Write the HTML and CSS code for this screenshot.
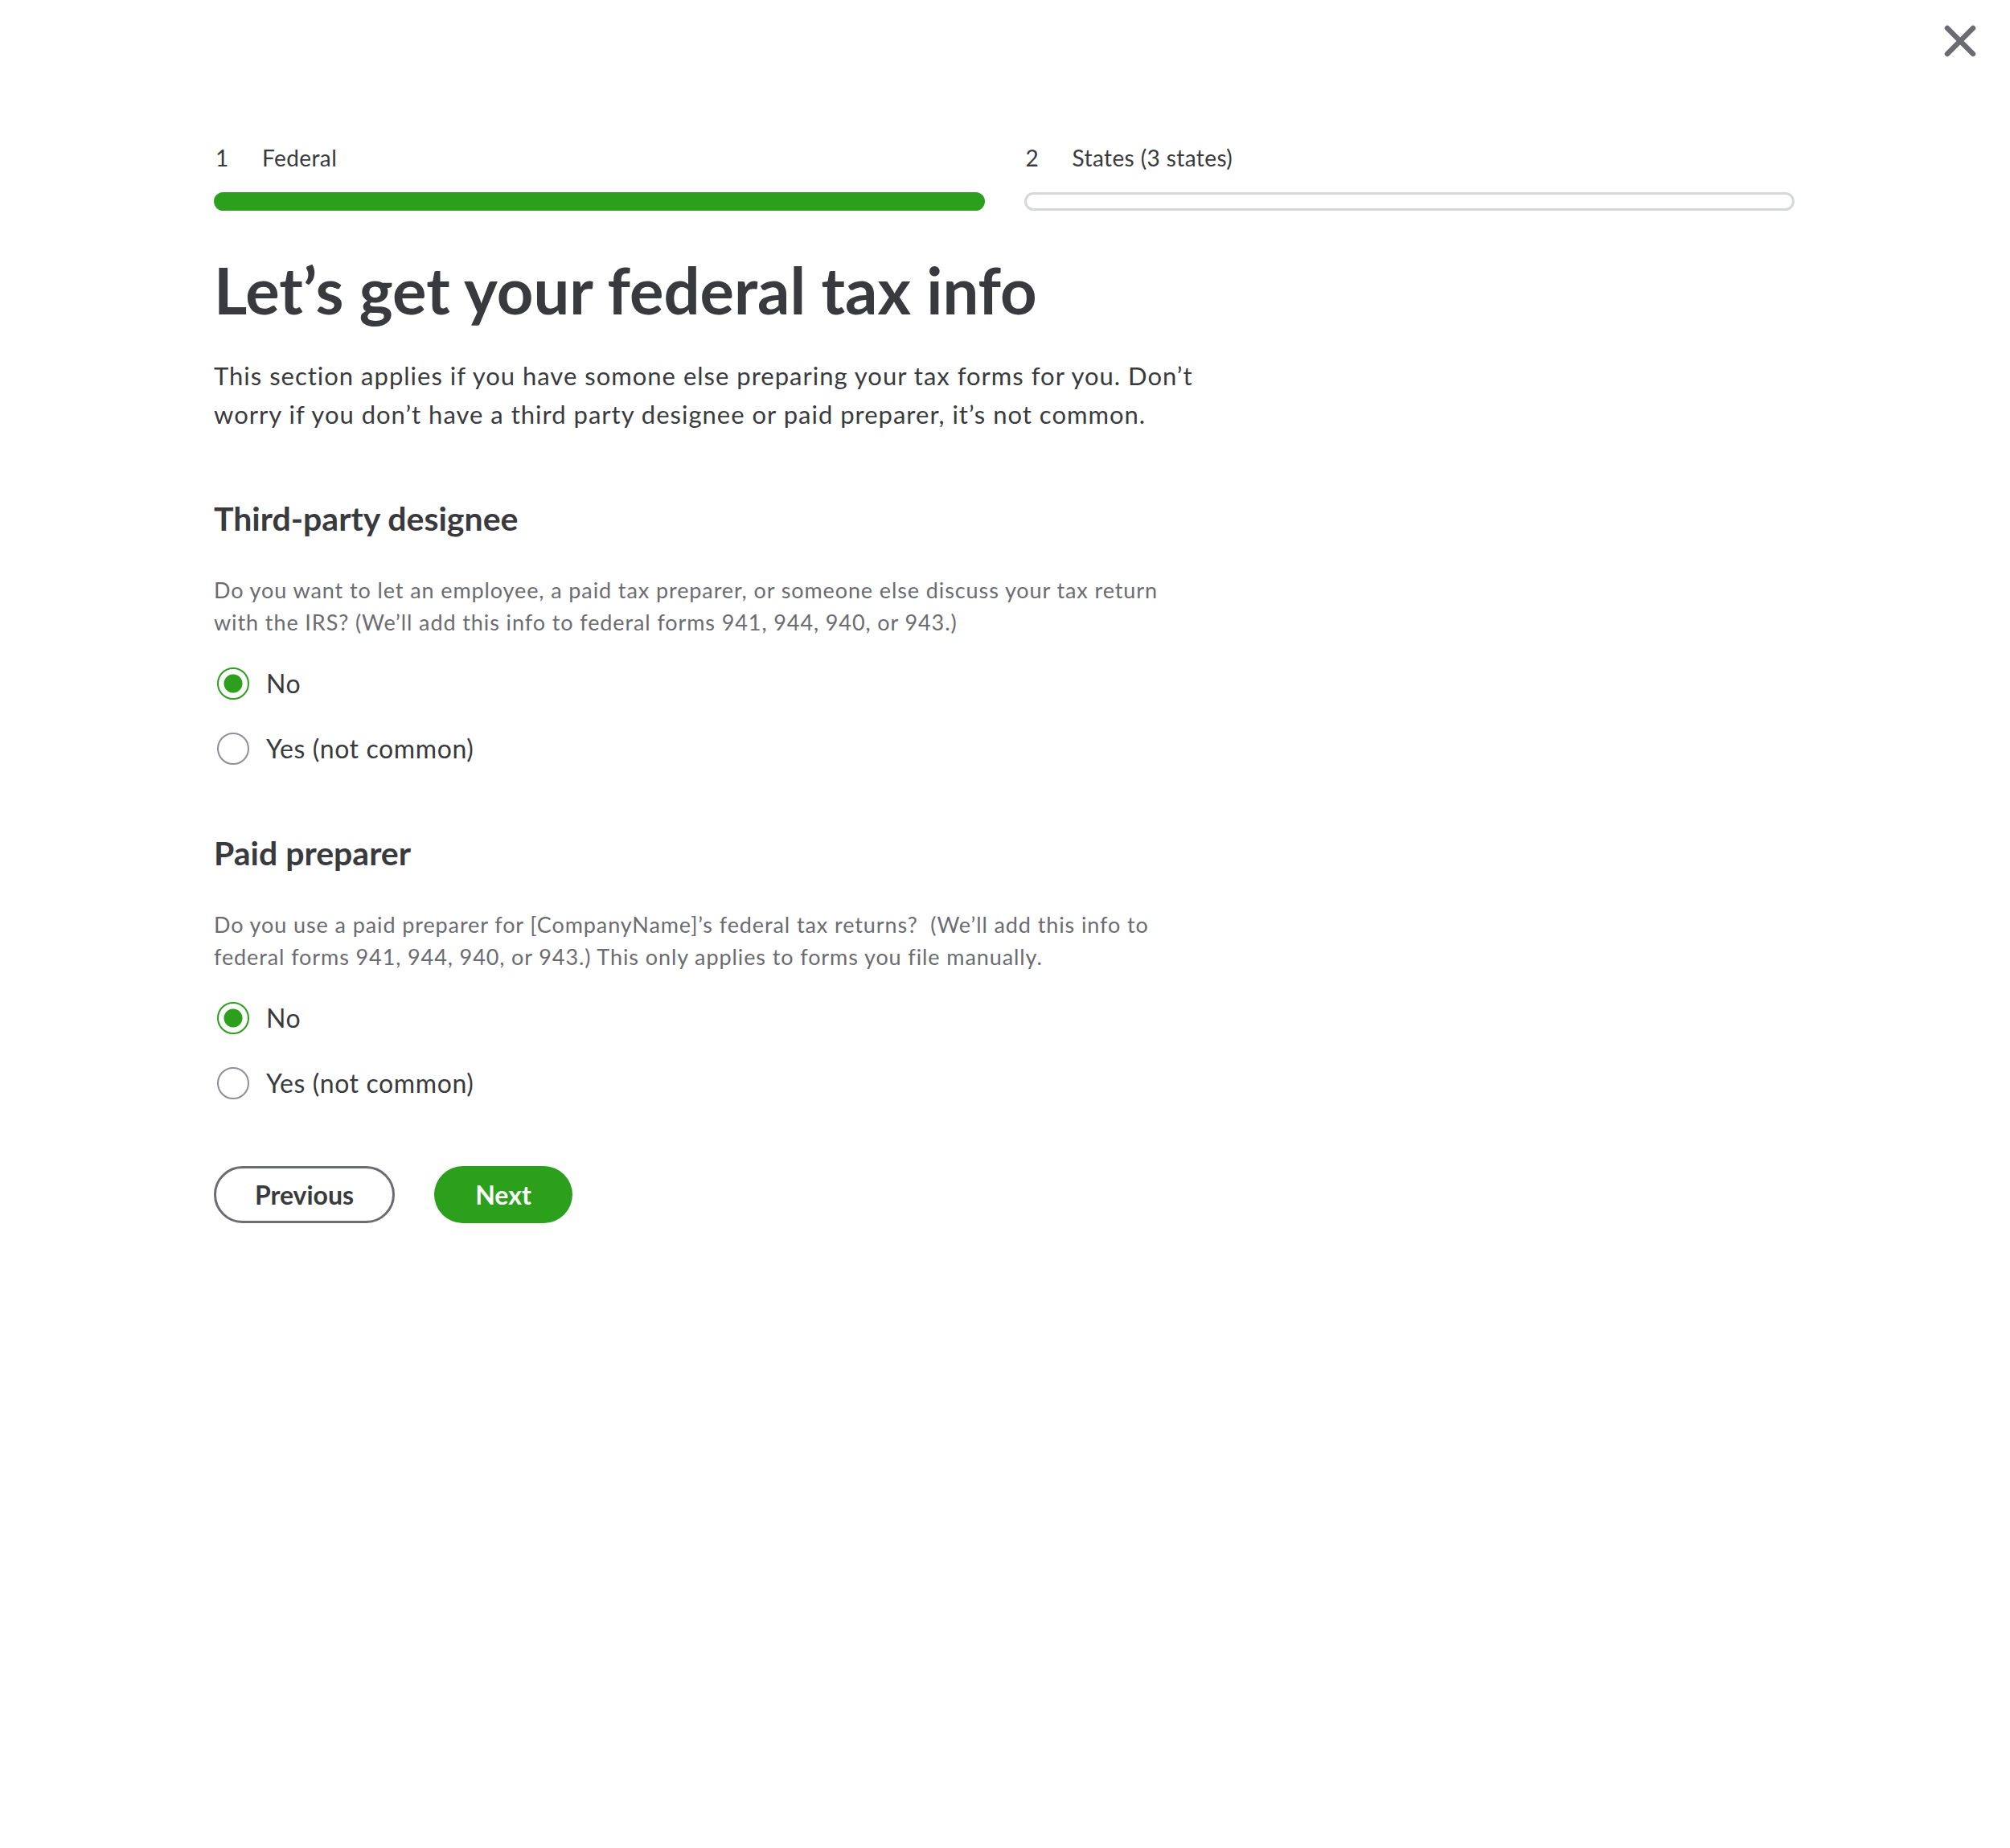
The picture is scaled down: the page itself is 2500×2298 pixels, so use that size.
FILE: index.html
```html
<!DOCTYPE html>
<html lang="en">
  <head>
    <meta charset="UTF-8" />
    <meta name="viewport" content="width=device-width, initial-scale=1.0" />
    <title>Federal tax info</title>
    <link rel="stylesheet" href="styles.css">
  </head>
  <body>
    <div class="topbar">
      <button class="close" aria-label="Close">
        <svg width="40" height="40" viewBox="0 0 40 40">
          <path d="M4 4 L36 36 M36 4 L4 36" stroke="#6b6c72" stroke-width="6.5" stroke-linecap="round" fill="none" />
        </svg>
      </button>
    </div>

    <main class="wizard">
      <ol class="steps">
        <li class="step done">
          <div class="step-label"><span class="step-num">1</span>Federal</div>
          <div class="step-bar"></div>
        </li>
        <li class="step">
          <div class="step-label"><span class="step-num">2</span>States (3 states)</div>
          <div class="step-bar"></div>
        </li>
      </ol>

      <h1>Let’s get your federal tax info</h1>
      <p class="intro">
        This section applies if you have somone else preparing your tax forms for you. Don’t
        worry if you don’t have a third party designee or paid preparer, it’s not common.
      </p>

      <section class="question">
        <h2>Third-party designee</h2>
        <p class="hint">
          Do you want to let an employee, a paid tax preparer, or someone else discuss your tax return
          with the IRS? (We’ll add this info to federal forms 941, 944, 940, or 943.)
        </p>
        <div class="radios">
          <label class="radio"><input type="radio" name="designee" checked /> No</label>
          <label class="radio"><input type="radio" name="designee" /> Yes (not common)</label>
        </div>
      </section>

      <section class="question">
        <h2>Paid preparer</h2>
        <p class="hint">
          Do you use a paid preparer for [CompanyName]’s federal tax returns?&nbsp; (We’ll add this info to
          federal forms 941, 944, 940, or 943.) This only applies to forms you file manually.
        </p>
        <div class="radios">
          <label class="radio"><input type="radio" name="preparer" checked /> No</label>
          <label class="radio"><input type="radio" name="preparer" /> Yes (not common)</label>
        </div>
      </section>

      <div class="actions">
        <button class="btn btn-secondary">Previous</button>
        <button class="btn btn-primary">Next</button>
      </div>
    </main>
  </body>
</html>
```

FILE: styles.css
```css
body,
html {
  margin: 0;
  padding: 0;
  background-color: #fff;
  font-family: "Lato", "Open Sans", sans-serif;
  color: #393a3d;
}

.topbar {
  display: flex;
  justify-content: flex-end;
  height: 102px;
  padding-right: 42px;
}

.close {
  border: none;
  background: none;
  padding: 0;
  margin-top: 31px;
  width: 40px;
  height: 40px;
  cursor: pointer;
}

.wizard {
  width: 1966px;
  padding-left: 266px;
  margin-top: 78px;
}

/* progress steps */
.steps {
  list-style: none;
  margin: 0;
  padding: 0;
  display: flex;
  gap: 49px;
}

.step {
  flex: 1;
}

.step-label {
  display: flex;
  align-items: center;
  font-size: 28px;
  line-height: 32px;
  letter-spacing: 0.4px;
  color: #393a3d;
}

.step-num {
  width: 58px;
  padding-left: 2px;
}

.step-bar {
  margin-top: 27px;
  height: 23px;
  border-radius: 12px;
  border: 3px solid #d4d7dc;
  box-sizing: border-box;
  background-color: #fff;
}

.step.done .step-bar {
  border-color: #2ca01c;
  background-color: #2ca01c;
}

h1 {
  margin: 54px 0 0;
  font-size: 79.5px;
  line-height: 90px;
  font-weight: 700;
  color: #393a3d;
}

.intro {
  margin: 37px 0 0;
  width: 1265px;
  font-size: 31px;
  line-height: 48px;
  letter-spacing: 1px;
  color: #393a3d;
}

.question {
  margin-top: 82px;
}

.question + .question {
  margin-top: 86px;
}

h2 {
  margin: 0;
  font-size: 41px;
  line-height: 48px;
  font-weight: 700;
  color: #393a3d;
}

.hint {
  margin: 45px 0 0;
  width: 1200px;
  font-size: 27px;
  line-height: 40px;
  letter-spacing: 0.9px;
  color: #6b6c72;
}

.radios {
  display: flex;
  flex-direction: column;
  gap: 41px;
  margin-top: 36px;
}

.radio {
  display: flex;
  align-items: center;
  gap: 21px;
  font-size: 32px;
  line-height: 40px;
  letter-spacing: 0.6px;
  color: #393a3d;
  cursor: pointer;
}

.radio input {
  appearance: none;
  margin: 0 0 0 4px;
  width: 40px;
  height: 40px;
  border: 2px solid #8d9096;
  border-radius: 50%;
  background-color: #fff;
  box-sizing: border-box;
}

.radio input:checked {
  border-color: #2ca01c;
  background: radial-gradient(circle, #2ca01c 0 11px, #fff 12px);
}

.actions {
  display: flex;
  gap: 49px;
  margin-top: 83px;
  padding-bottom: 200px;
}

.btn {
  height: 71px;
  border-radius: 36px;
  font-family: "Lato", sans-serif;
  font-size: 32px;
  font-weight: 700;
  cursor: pointer;
  box-sizing: border-box;
}

.btn-secondary {
  width: 225px;
  border: 3px solid #6b6c72;
  background-color: #fff;
  color: #393a3d;
}

.btn-primary {
  width: 172px;
  border: none;
  background-color: #2ca01c;
  color: #fff;
}
```
